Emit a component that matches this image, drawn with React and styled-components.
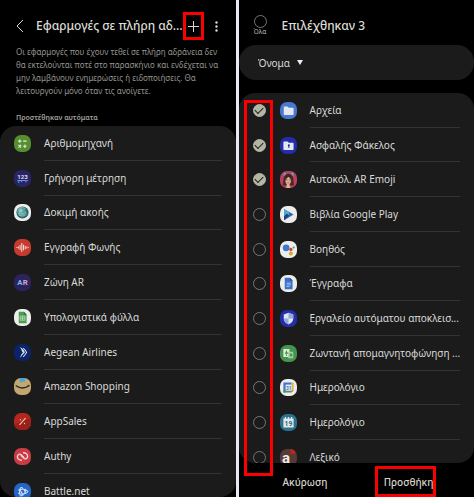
import React from "react";
import styled, { createGlobalStyle, css } from "styled-components";

const GlobalStyle = createGlobalStyle`
  * {
    box-sizing: border-box;
  }

  body {
    margin: 0;
    background: #e9e9f4;
    color: #dadad8;
    font-family: "Noto Sans", "Open Sans", sans-serif;
    font-size: 10px;
  }

  h1, h2, p, ul {
    margin: 0;
    padding: 0;
    font-weight: 400;
  }

  button, select, input {
    margin: 0;
    padding: 0;
    border: 0;
    background: none;
    color: inherit;
    font: inherit;
  }
`;

const Page = styled.main`
  display: flex;
  gap: 3px;
  min-height: 100vh;
`;

const Screen = styled.section`
  display: flex;
  flex: 1 1 0;
  flex-direction: column;
  min-width: 0;
  background: #000;
`;

const Header = styled.header`
  display: flex;
  align-items: center;
  height: 45px;
  padding: 7px 6px 0 15px;
`;

const Title = styled.h1`
  flex: 1;
  min-width: 0;
  color: #dcdcd4;
  font-size: 12px;
  font-weight: 500;
  line-height: 20px;
  white-space: nowrap;
`;

const IconButton = styled.button`
  position: relative;
  display: flex;
  flex: none;
  align-items: center;
  justify-content: center;
  width: ${props => props.$width}px;
  height: 28px;
  color: #d8d8d0;
`;

const BackButton = styled(IconButton)`
  margin-right: 11px;
`;

const highlight = css`
  border: 3px solid #fb0000;
  pointer-events: none;
`;

const Highlight = styled.span`
  position: absolute;
  inset: 0;
  ${highlight}
`;

const ColumnHighlight = styled.span`
  position: absolute;
  top: 7px;
  bottom: -13px;
  left: 5px;
  z-index: 1;
  width: 29px;
  ${highlight}
`;

const Description = styled.p`
  padding: 0 12px 0 16px;
  color: #94948e;
  font-size: 8px;
  line-height: 13px;
`;

const SectionTitle = styled.h2`
  padding: 13px 16px 0;
  color: #a0a09a;
  font-size: 7px;
  font-weight: 600;
  line-height: 16px;
`;

const Panel = styled.div`
  position: relative;
  display: flex;
  flex: 1;
`;

const List = styled.ul`
  display: flex;
  flex: 1;
  flex-direction: column;
  min-width: 0;
  overflow: hidden;
  border-radius: 16px;
  background: #1b1b1b;
  list-style: none;
`;

const Row = styled.li`
  display: flex;
  flex: 1 0 0;
  padding: 0 14px;

  &:last-child {
    flex: 0 0 23px;
    height: 23px;
  }
`;

const RowLabel = styled.label`
  display: flex;
  flex: 1;
  align-items: center;
  min-width: 0;

  ${Row}:last-child & {
    height: 35px;
  }
`;

const RowText = styled.span`
  display: flex;
  flex: 1;
  align-items: center;
  align-self: stretch;
  min-width: 0;
  margin-left: 13px;
  border-bottom: 1px solid #343434;
  white-space: nowrap;
`;

const AppIcon = styled.svg`
  flex: none;
  width: 17px;
  height: 17px;
  border-radius: 7px;
`;

const Check = styled.input`
  display: flex;
  flex: none;
  align-items: center;
  justify-content: center;
  width: 13px;
  height: 13px;
  border: 1px solid #777;
  border-radius: 50%;
  appearance: none;

  &:checked {
    border-color: #b4b6a4;
    background: #b4b6a4;
  }

  &:checked::after {
    width: 7px;
    height: 4px;
    margin-bottom: 2px;
    border: solid #1b1b1b;
    border-width: 0 0 1px 1px;
    content: "";
    transform: rotate(-45deg);
  }

  ${Row} & {
    margin-right: 14px;
  }
`;

const SelectAll = styled.label`
  display: flex;
  flex-direction: column;
  align-items: center;
  margin-right: 15px;
  color: #b4b4ac;
  font-family: Roboto, sans-serif;
  font-size: 7px;
  line-height: 9px;
`;

const SortBar = styled.div`
  display: flex;
  align-items: center;
  gap: 3px;
  height: 35px;
  margin-bottom: 13px;
  padding: 0 19px;
  border-radius: 17px;
  background: #1b1b1b;
`;

const SortSelect = styled.select`
  width: 36px;
  height: 20px;
  appearance: none;
`;

const Footer = styled.footer`
  display: flex;
  justify-content: space-between;
  height: 34px;
  padding: 3px 38px 0 36px;
`;

const FooterButton = styled.button`
  position: relative;
  width: 61px;
  padding-left: ${props => (props.$primary ? 6 : 0)}px;
  color: #d4d4cc;
  font-weight: 500;
  white-space: nowrap;
`;

const Glyph = ({ size = 20, children, ...props }) => (
  <text textAnchor="middle" fontSize={size} fontWeight="700" fontFamily="Roboto, sans-serif" {...props}>
    {children}
  </text>
);

const icons = {
  calculator: ["#568f2f", (
    <g stroke="#e8f0dc" strokeWidth="3" fill="none">
      <path d="M12 18h10M17 13v10M27 18h10M13 29l8 8M21 29l-8 8M27 33h10M32 28v10" />
    </g>
  )],
  measure: ["#282565", (
    <>
      <Glyph x="25" y="26" size={18} fill="#dedbf0">123</Glyph>
      <path d="M10 31h30" stroke="#55a0d8" strokeWidth="3" />
      <path d="M14 32v6M22 32v3" stroke="#55a0d8" strokeWidth="3" />
      <path d="M28 31h12M35 32v5" stroke="#9876d0" strokeWidth="3" />
    </>
  )],
  hearing: ["#eeeeec", (
    <>
      <circle cx="25" cy="25" r="18" fill="#28686c" />
      <circle cx="22" cy="23" r="13" fill="#579d9e" />
      <path d="M12 16q10-10 22-2M13 26q10 8 24-2M14 32q13 9 24-3" stroke="#b0d5d0" strokeWidth="2" fill="none" />
      <circle cx="20" cy="20" r="6" fill="#91c5c0" />
    </>
  )],
  recorder: ["#c63a2e", (
    <path d="M7 25h3M13 22v6M18 18v14M23 12v26M28 17v16M33 20v10M38 22v6M42 25h2" stroke="#f5ddd6" strokeWidth="3" fill="none" />
  )],
  ar: ["#2b235d", (
    <>
      <Glyph x="17" y="33" size={23} fill="#82b9e8">A</Glyph>
      <Glyph x="33" y="33" size={23} fill="#d5a8cc">R</Glyph>
    </>
  )],
  sheets: ["#ededeb", (
    <>
      <path d="M14 8h15l8 8v26H14z" fill="#4a9d50" />
      <path d="M29 8l8 8h-8z" fill="#29733a" />
      <path d="M18 21h14v12H18zM18 27h14M25 21v12" fill="none" stroke="#cce5cc" strokeWidth="2" />
    </>
  )],
  aegean: ["#0b2367", (
    <>
      <path d="M17 9c8 3 13 9 15 16-5 5-9 10-15 16 3-6 5-11 7-16-1-6-3-11-7-16z" fill="#d5dcee" />
      <path d="M27 12c5 4 8 8 10 13-3 5-6 9-10 13" fill="none" stroke="#d5dcee" strokeWidth="3" />
      <path d="M13 16l13 9-11 9" fill="none" stroke="#0b2367" strokeWidth="2" />
    </>
  )],
  amazon: ["#c5a671", (
    <>
      <path d="M17 0h16v9l-4 3-4-2-4 4-4-3z" fill="#49a8cf" />
      <path d="M5 22q20 15 40 0" fill="none" stroke="#292c2b" strokeWidth="4" />
      <path d="M40 21l5 1-2 4" fill="none" stroke="#292c2b" strokeWidth="2" />
    </>
  )],
  appsales: ["#b5261c", (
    <>
      <path d="M0 34L50 14v36H0z" fill="#9a2019" />
      <path d="M16 35L34 15" stroke="#f1c8b9" strokeWidth="3" />
      <circle cx="19" cy="20" r="2" fill="#f1c8b9" />
      <circle cx="31" cy="31" r="2" fill="#f1c8b9" />
    </>
  )],
  authy: ["#cb3b46", (
    <path d="M29 28l-9-9c-4-3-10 1-10 7 0 6 6 10 12 10M21 22l9 9c4 3 10-1 10-7 0-6-6-10-12-10" fill="none" stroke="#f6d8d7" strokeWidth="4" strokeLinecap="round" />
  )],
  battle: ["#2664c5", (
    <path d="M18 37C14 23 18 9 24 14c5 5 10 12 9 18M12 29c8 6 25 4 29-4-6-8-20-8-29-4M19 39c12-6 18-14 13-22M16 18l12 18" fill="none" stroke="#c9e2fb" strokeWidth="3" />
  )],
  files: ["#4878d0", (
    <path d="M11 15q0-2 2-2h9l4 4h12q2 0 2 2v17q0 2-2 2H13q-2 0-2-2z" fill="#e7e8ee" />
  )],
  secure: ["#222eac", (
    <>
      <path d="M10 15q0-2 2-2h10l4 4h12q2 0 2 2v17q0 2-2 2H12q-2 0-2-2z" fill="#e7e8ef" />
      <circle cx="26" cy="24" r="3" fill="#222c91" />
      <path d="M26 25v7" stroke="#222c91" strokeWidth="3" />
    </>
  )],
  emoji: ["#bd3e65", (
    <>
      <path d="M11 14l3-8 6 7M30 12l7-6 2 10" fill="#7aa2a5" stroke="#7aa2a5" strokeWidth="3" />
      <path d="M11 20q3-12 14-12 12 0 14 12l2 23H8z" fill="#4a2b24" />
      <path d="M17 22q8-8 15 0v11l-4 6 3 11H18l2-11-4-6z" fill="#dcae94" />
      <path d="M14 26q8-3 11-11 4 9 10 11-2-15-11-15-9 1-10 15z" fill="#392520" />
      <path d="M18 26h4M27 26h4" stroke="#38241f" strokeWidth="2" />
      <path d="M22 34q3 2 5 0" fill="none" stroke="#a83b3e" strokeWidth="2" />
    </>
  )],
  books: ["#ececeb", (
    <>
      <path d="M12 9l28 16-28 17z" fill="#2f66ad" />
      <path d="M12 9l15 9-1 10-6-5-8 7z" fill="#4eacd4" />
      <path d="M12 42V30l8-7 7 6z" fill="#20437e" />
    </>
  )],
  assistant: ["#ededeb", (
    <>
      <circle cx="18" cy="20" r="10" fill="#3c78d1" />
      <circle cx="32" cy="25" r="5" fill="#d64336" />
      <circle cx="32" cy="37" r="6" fill="#dda62d" />
      <circle cx="40" cy="19" r="3" fill="#4c9c54" />
    </>
  )],
  docs: ["#ececeb", (
    <>
      <path d="M14 8h15l8 8v26H14z" fill="#3c70cc" />
      <path d="M29 8l8 8h-8z" fill="#2551a0" />
      <path d="M19 24h13M19 29h13M19 34h9" stroke="#d5e0f4" strokeWidth="2" />
    </>
  )],
  shield: ["#222eac", (
    <>
      <path d="M25 8l14 5v12q0 11-14 18Q11 36 11 25V13z" fill="#dfe4f0" />
      <path d="M25 8l14 5v12H25zM11 25h14v18Q13 37 11 25z" fill="#93a8d8" />
    </>
  )],
  transcribe: ["#45954d", (
    <>
      <path d="M10 12h18v23H10z" fill="#e1ece0" />
      <path d="M24 20h15v19H24z" fill="#a8ceaa" />
      <path d="M19 16v10M15 22q4 8 8 0M19 28v4" stroke="#45954d" strokeWidth="3" fill="none" />
      <path d="M29 25h7v9h-7z" fill="#45954d" />
    </>
  )],
  gcal: ["#ededeb", (
    <>
      <path d="M10 10h24v7H17v23h-7z" fill="#3d76d3" />
      <path d="M34 10h6v24h-6z" fill="#ddb33c" />
      <path d="M10 34h24v6H10z" fill="#47994f" />
      <path d="M34 34h6l-6 6z" fill="#cf4236" />
      <path d="M17 17h17v17H17z" fill="#e8eaf0" />
      <Glyph x="26" y="31" size={14} fill="#3d76d3">31</Glyph>
    </>
  )],
  calendar: ["#2c7190", (
    <>
      <path d="M10 13h4V9h4v4h5V9h4v4h5V9h4v4h4v27H10z" fill="#e1e8e9" />
      <Glyph x="25" y="35" size={20} fill="#2c6683">19</Glyph>
    </>
  )],
  dictionary: ["#573a35", (
    <>
      <path d="M31 0h13v17l-6-5-7 5z" fill="#bf271e" />
      <Glyph x="18" y="41" size={44} fill="#f0ece9">a</Glyph>
    </>
  )],
};

const sleepingApps = [
  ["calculator", "Αριθμομηχανή"],
  ["measure", "Γρήγορη μέτρηση"],
  ["hearing", "Δοκιμή ακοής"],
  ["recorder", "Εγγραφή Φωνής"],
  ["ar", "Ζώνη AR"],
  ["sheets", "Υπολογιστικά φύλλα"],
  ["aegean", "Aegean Airlines"],
  ["amazon", "Amazon Shopping"],
  ["appsales", "AppSales"],
  ["authy", "Authy"],
  ["battle", "Battle.net"],
];

const availableApps = [
  ["files", "Αρχεία", true],
  ["secure", "Ασφαλής Φάκελος", true],
  ["emoji", "Αυτοκόλ. AR Emoji", true],
  ["books", "Βιβλία Google Play"],
  ["assistant", "Βοηθός"],
  ["docs", "Έγγραφα"],
  ["shield", "Εργαλείο αυτόματου αποκλεισ..."],
  ["transcribe", "Ζωντανή απομαγνητοφώνηση ..."],
  ["gcal", "Ημερολόγιο"],
  ["calendar", "Ημερολόγιο"],
  ["dictionary", "Λεξικό"],
];

const AppRow = ({ icon, name, selectable, checked }) => {
  const [color, drawing] = icons[icon];
  return (
    <Row>
      <RowLabel as={selectable ? "label" : "div"}>
        {selectable && <Check type="checkbox" defaultChecked={checked} />}
        <AppIcon viewBox="0 0 50 50" aria-hidden="true">
          <rect width="50" height="50" fill={color} />
          {drawing}
        </AppIcon>
        <RowText>{name}</RowText>
      </RowLabel>
    </Row>
  );
};

const SleepingScreen = () => (
  <Screen>
    <Header>
      <BackButton $width={10} aria-label="Πίσω">
        <svg width="8" height="14" viewBox="0 0 8 14" fill="none" stroke="currentColor">
          <path d="M7 1L1 7l6 6" />
        </svg>
      </BackButton>
      <Title>Εφαρμογές σε πλήρη αδ...</Title>
      <IconButton $width={21} aria-label="Προσθήκη">
        <svg width="11" height="11" viewBox="0 0 11 11" stroke="currentColor">
          <path d="M0 5.5h11M5.5 0v11" />
        </svg>
        <Highlight />
      </IconButton>
      <IconButton $width={26} aria-label="Περισσότερα">
        <svg width="3" height="11" viewBox="0 0 3 11" fill="currentColor">
          <circle cx="1.5" cy="1.5" r="1.2" />
          <circle cx="1.5" cy="5.5" r="1.2" />
          <circle cx="1.5" cy="9.5" r="1.2" />
        </svg>
      </IconButton>
    </Header>
    <Description>
      Οι εφαρμογές που έχουν τεθεί σε πλήρη αδράνεια δεν θα εκτελούνται ποτέ
      στο παρασκήνιο και ενδέχεται να μην λαμβάνουν ενημερώσεις ή
      ειδοποιήσεις. Θα λειτουργούν μόνο όταν τις ανοίγετε.
    </Description>
    <SectionTitle>Προστέθηκαν αυτόματα</SectionTitle>
    <Panel>
      <List>
        {sleepingApps.map(([icon, name]) => (
          <AppRow key={icon} icon={icon} name={name} />
        ))}
      </List>
    </Panel>
  </Screen>
);

const SelectScreen = () => (
  <Screen>
    <Header>
      <SelectAll>
        <Check type="checkbox" />
        Όλα
      </SelectAll>
      <Title>Επιλέχθηκαν 3</Title>
    </Header>
    <SortBar>
      <SortSelect aria-label="Ταξινόμηση">
        <option>Όνομα</option>
      </SortSelect>
      <svg width="6" height="5" viewBox="0 0 6 5" fill="#eee" aria-hidden="true">
        <path d="M0 0h6L3 5z" />
      </svg>
    </SortBar>
    <Panel>
      <List>
        {availableApps.map(([icon, name, checked]) => (
          <AppRow key={icon} icon={icon} name={name} checked={checked} selectable />
        ))}
      </List>
      <ColumnHighlight />
    </Panel>
    <Footer>
      <FooterButton>Ακύρωση</FooterButton>
      <FooterButton $primary>
        Προσθήκη
        <Highlight />
      </FooterButton>
    </Footer>
  </Screen>
);

const App = () => (
  <>
    <GlobalStyle />
    <Page>
      <SleepingScreen />
      <SelectScreen />
    </Page>
  </>
);

export default App;
